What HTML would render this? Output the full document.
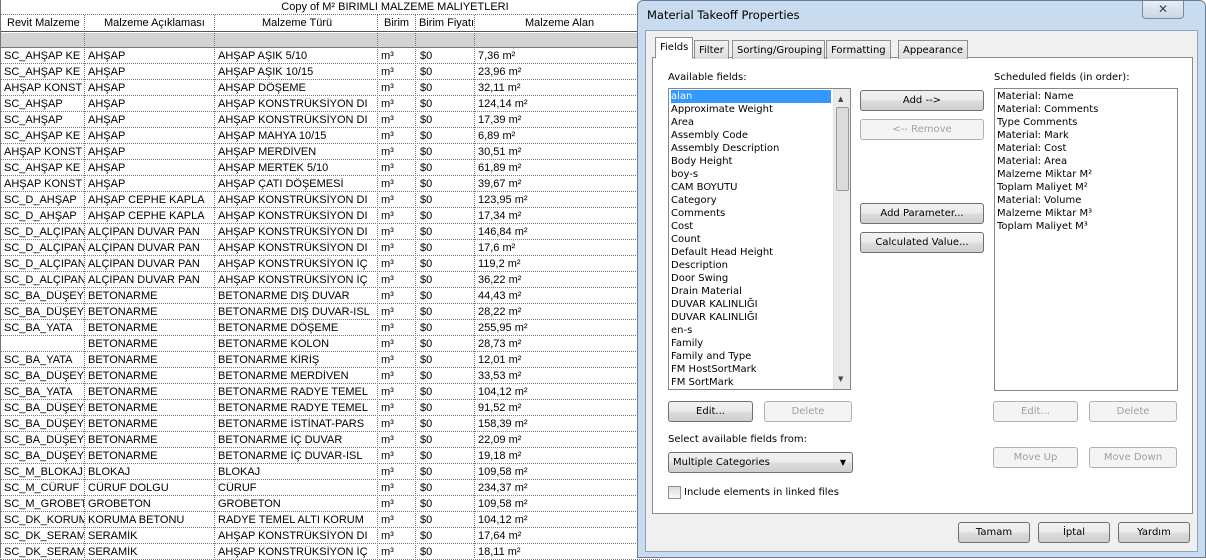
<!DOCTYPE html>
<html><head><meta charset="utf-8"><style>
*{margin:0;padding:0;box-sizing:border-box}
body{width:1206px;height:558px;overflow:hidden;background:#fff;font-family:"Liberation Sans",sans-serif;position:relative}
.t{position:absolute;left:0;top:0;width:660px;font-size:11px;color:#000}
.row{position:absolute;left:0;height:16px;width:660px;border-bottom:1px dotted #777;white-space:nowrap}
.row span{position:absolute;top:2px;overflow:hidden;height:14px}
.vl{position:absolute;top:15px;height:543px;border-left:1px dotted #777}
.dlg{position:absolute;left:637px;top:0;width:569px;height:558px;background:#c9dcef;border:1px solid #6a7d93;border-radius:6px 6px 0 0}
.in{position:absolute;left:7px;top:29px;width:553px;height:522px;background:#f0f0f0;border:1px solid #8ea4bd}
.ab{position:absolute;font-family:"DejaVu Sans",sans-serif;font-size:10px;color:#000}
.btn{position:absolute;height:21px;border:1px solid #707070;border-radius:3px;background:linear-gradient(#f2f2f2,#ebebeb 50%,#dddddd 51%,#cfcfcf);font-size:10px;text-align:center;line-height:19px;font-family:"DejaVu Sans",sans-serif}
.dis{border-color:#adb2b5;background:#f4f4f4;color:#a0a0a0}
.list{position:absolute;background:#fff;border:1px solid #828790;font-size:10px;font-family:"DejaVu Sans",sans-serif;line-height:13px;padding:1px 2px}
.tab{position:absolute;top:38px;height:19px;border:1px solid #8e8f8f;border-bottom:none;background:linear-gradient(#f2f2f2,#dcdcdc);font-size:10px;font-family:"DejaVu Sans",sans-serif;padding:4px 4px 0;white-space:nowrap}
</style></head><body>
<div class="t">
<div style="position:absolute;left:0;top:0;width:640px;height:15px;border-bottom:1px dotted #777;text-align:center;font-size:11px;line-height:15px;padding-left:150px">Copy of M² BIRIMLI MALZEME MALIYETLERI</div>
<div class="row" style="top:15px;height:17px;border-bottom:1px solid #555"><span style="left:7px">Revit Malzeme</span><span style="left:104px">Malzeme Açıklaması</span><span style="left:262px">Malzeme Türü</span><span style="left:384px">Birim</span><span style="left:419px">Birim Fiyatı</span><span style="left:525px">Malzeme Alan</span></div>
<div style="position:absolute;left:0;top:33px;width:660px;height:15px;background:#d3d3d3;border-bottom:1px solid #777"></div>
<div id="rows"></div>
<div class="vl" style="left:84px"></div><div class="vl" style="left:214px"></div><div class="vl" style="left:377px"></div><div class="vl" style="left:415px"></div><div class="vl" style="left:474px"></div>
<div style="position:absolute;left:0;top:0;height:558px;border-left:1px solid #777"></div>
</div>
<script>
var d=[["SC_AHŞAP KE","AHŞAP","AHŞAP AŞIK 5/10","7,36"],["SC_AHŞAP KE","AHŞAP","AHŞAP AŞIK 10/15","23,96"],["AHŞAP KONST","AHŞAP","AHŞAP DÖŞEME","32,11"],["SC_AHŞAP","AHŞAP","AHŞAP KONSTRÜKSİYON DI","124,14"],["SC_AHŞAP","AHŞAP","AHŞAP KONSTRÜKSİYON DI","17,39"],["SC_AHŞAP KE","AHŞAP","AHŞAP MAHYA 10/15","6,89"],["AHŞAP KONST","AHŞAP","AHŞAP MERDİVEN","30,51"],["SC_AHŞAP KE","AHŞAP","AHŞAP MERTEK 5/10","61,89"],["AHŞAP KONST","AHŞAP","AHŞAP ÇATI DÖŞEMESİ","39,67"],["SC_D_AHŞAP","AHŞAP CEPHE KAPLA","AHŞAP KONSTRÜKSİYON DI","123,95"],["SC_D_AHŞAP","AHŞAP CEPHE KAPLA","AHŞAP KONSTRÜKSİYON DI","17,34"],["SC_D_ALÇIPAN","ALÇIPAN DUVAR PAN","AHŞAP KONSTRÜKSİYON DI","146,84"],["SC_D_ALÇIPAN","ALÇIPAN DUVAR PAN","AHŞAP KONSTRÜKSİYON DI","17,6"],["SC_D_ALÇIPAN","ALÇIPAN DUVAR PAN","AHŞAP KONSTRÜKSİYON İÇ","119,2"],["SC_D_ALÇIPAN","ALÇIPAN DUVAR PAN","AHŞAP KONSTRÜKSİYON İÇ","36,22"],["SC_BA_DÜŞEY","BETONARME","BETONARME DIŞ DUVAR","44,43"],["SC_BA_DÜŞEY","BETONARME","BETONARME DIŞ DUVAR-ISL","28,22"],["SC_BA_YATA","BETONARME","BETONARME DÖŞEME","255,95"],["","BETONARME","BETONARME KOLON","28,73"],["SC_BA_YATA","BETONARME","BETONARME KİRİŞ","12,01"],["SC_BA_DÜŞEY","BETONARME","BETONARME MERDİVEN","33,53"],["SC_BA_YATA","BETONARME","BETONARME RADYE TEMEL","104,12"],["SC_BA_DÜŞEY","BETONARME","BETONARME RADYE TEMEL","91,52"],["SC_BA_DÜŞEY","BETONARME","BETONARME İSTİNAT-PARS","158,39"],["SC_BA_DÜŞEY","BETONARME","BETONARME İÇ DUVAR","22,09"],["SC_BA_DÜŞEY","BETONARME","BETONARME İÇ DUVAR-ISL","19,18"],["SC_M_BLOKAJ","BLOKAJ","BLOKAJ","109,58"],["SC_M_CÜRUF","CÜRUF DOLGU","CÜRUF","234,37"],["SC_M_GROBET","GROBETON","GROBETON","109,58"],["SC_DK_KORUM","KORUMA BETONU","RADYE TEMEL ALTI KORUM","104,12"],["SC_DK_SERAM","SERAMİK","AHŞAP KONSTRÜKSİYON DI","17,64"],["SC_DK_SERAM","SERAMİK","AHŞAP KONSTRÜKSİYON İÇ","18,11"]];
var h="";d.forEach(function(r,i){h+='<div class="row" style="top:'+(48+i*16)+'px"><span style="left:4px;width:80px">'+r[0]+'</span><span style="left:88px;width:125px">'+r[1]+'</span><span style="left:218px;width:158px">'+r[2]+'</span><span style="left:381px">m³</span><span style="left:420px">$0</span><span style="left:478px">'+r[3]+' m²</span></div>'});
document.getElementById("rows").innerHTML=h;
</script>
<div class="dlg">
<div class="ab" style="left:9px;top:7px;font-size:11.5px">Material Takeoff Properties</div>
<div style="position:absolute;left:504px;top:0;width:42px;height:18px;border:1px solid #7a8ba0;border-top:none;border-radius:0 0 4px 4px;background:linear-gradient(#e6eef7,#c8d6e6);text-align:center;font-size:12px;color:#444;line-height:17px">✕</div>
<div class="in">
<div style="position:absolute;left:6px;top:26px;width:541px;height:457px;background:#fff;border:1px solid #898c95"></div>
<div class="tab" style="left:9px;top:6px;height:22px;background:#fff;border-bottom:1px solid #fff">Fields</div>
<div class="tab" style="left:48px;top:9px">Filter</div>
<div class="tab" style="left:86px;top:9px;width:93px">Sorting/Grouping</div>
<div class="tab" style="left:180px;top:9px">Formatting</div>
<div class="tab" style="left:252px;top:9px">Appearance</div>
<div class="ab" style="left:22px;top:41px">Available fields:</div>
<div class="ab" style="left:348px;top:41px">Scheduled fields (in order):</div>
<div class="list" style="left:22px;top:57px;width:183px;height:302px"><div style="background:#3399ff;color:#fff;width:160px">alan</div>Approximate Weight<br>Area<br>Assembly Code<br>Assembly Description<br>Body Height<br>boy-s<br>CAM BOYUTU<br>Category<br>Comments<br>Cost<br>Count<br>Default Head Height<br>Description<br>Door Swing<br>Drain Material<br>DUVAR KALINLIĞI<br>DUVAR KALINLIĞI<br>en-s<br>Family<br>Family and Type<br>FM HostSortMark<br>FM SortMark
<div style="position:absolute;right:0;top:0;width:17px;height:300px;background:#eaeaea;border-left:1px solid #e0e0e0"><div style="position:absolute;left:2px;top:18px;width:13px;height:84px;background:#dcdcdc;border:1px solid #999;border-radius:2px"></div><div style="position:absolute;left:4px;top:4px;font-size:7px;color:#444">▲</div><div style="position:absolute;left:4px;bottom:3px;font-size:7px;color:#444">▼</div></div></div>
<div class="list" style="left:348px;top:57px;width:184px;height:303px">Material: Name<br>Material: Comments<br>Type Comments<br>Material: Mark<br>Material: Cost<br>Material: Area<br>Malzeme Miktar M²<br>Toplam Maliyet M²<br>Material: Volume<br>Malzeme Miktar M³<br>Toplam Maliyet M³</div>
<div class="btn" style="left:214px;top:59px;width:124px">Add --&gt;</div>
<div class="btn dis" style="left:214px;top:88px;width:124px">&lt;-- Remove</div>
<div class="btn" style="left:214px;top:172px;width:124px">Add Parameter...</div>
<div class="btn" style="left:214px;top:201px;width:124px">Calculated Value...</div>
<div class="btn" style="left:22px;top:370px;width:85px">Edit...</div>
<div class="btn dis" style="left:118px;top:370px;width:88px">Delete</div>
<div class="btn dis" style="left:347px;top:370px;width:85px">Edit...</div>
<div class="btn dis" style="left:443px;top:370px;width:88px">Delete</div>
<div class="ab" style="left:22px;top:403px">Select available fields from:</div>
<div class="btn" style="left:22px;top:421px;width:185px;text-align:left;padding-left:4px">Multiple Categories<span style="position:absolute;right:6px;font-size:8px">▼</span></div>
<div class="btn dis" style="left:347px;top:416px;width:85px">Move Up</div>
<div class="btn dis" style="left:443px;top:416px;width:88px">Move Down</div>
<div style="position:absolute;left:22px;top:455px;width:13px;height:13px;border:1px solid #8f8f8f;background:linear-gradient(#ddd,#f8f8f8)"></div>
<div class="ab" style="left:38px;top:456px">Include elements in linked files</div>
<div class="btn" style="left:312px;top:491px;width:72px">Tamam</div>
<div class="btn" style="left:392px;top:491px;width:72px">İptal</div>
<div class="btn" style="left:472px;top:491px;width:72px">Yardım</div>
</div></div>
</body></html>
